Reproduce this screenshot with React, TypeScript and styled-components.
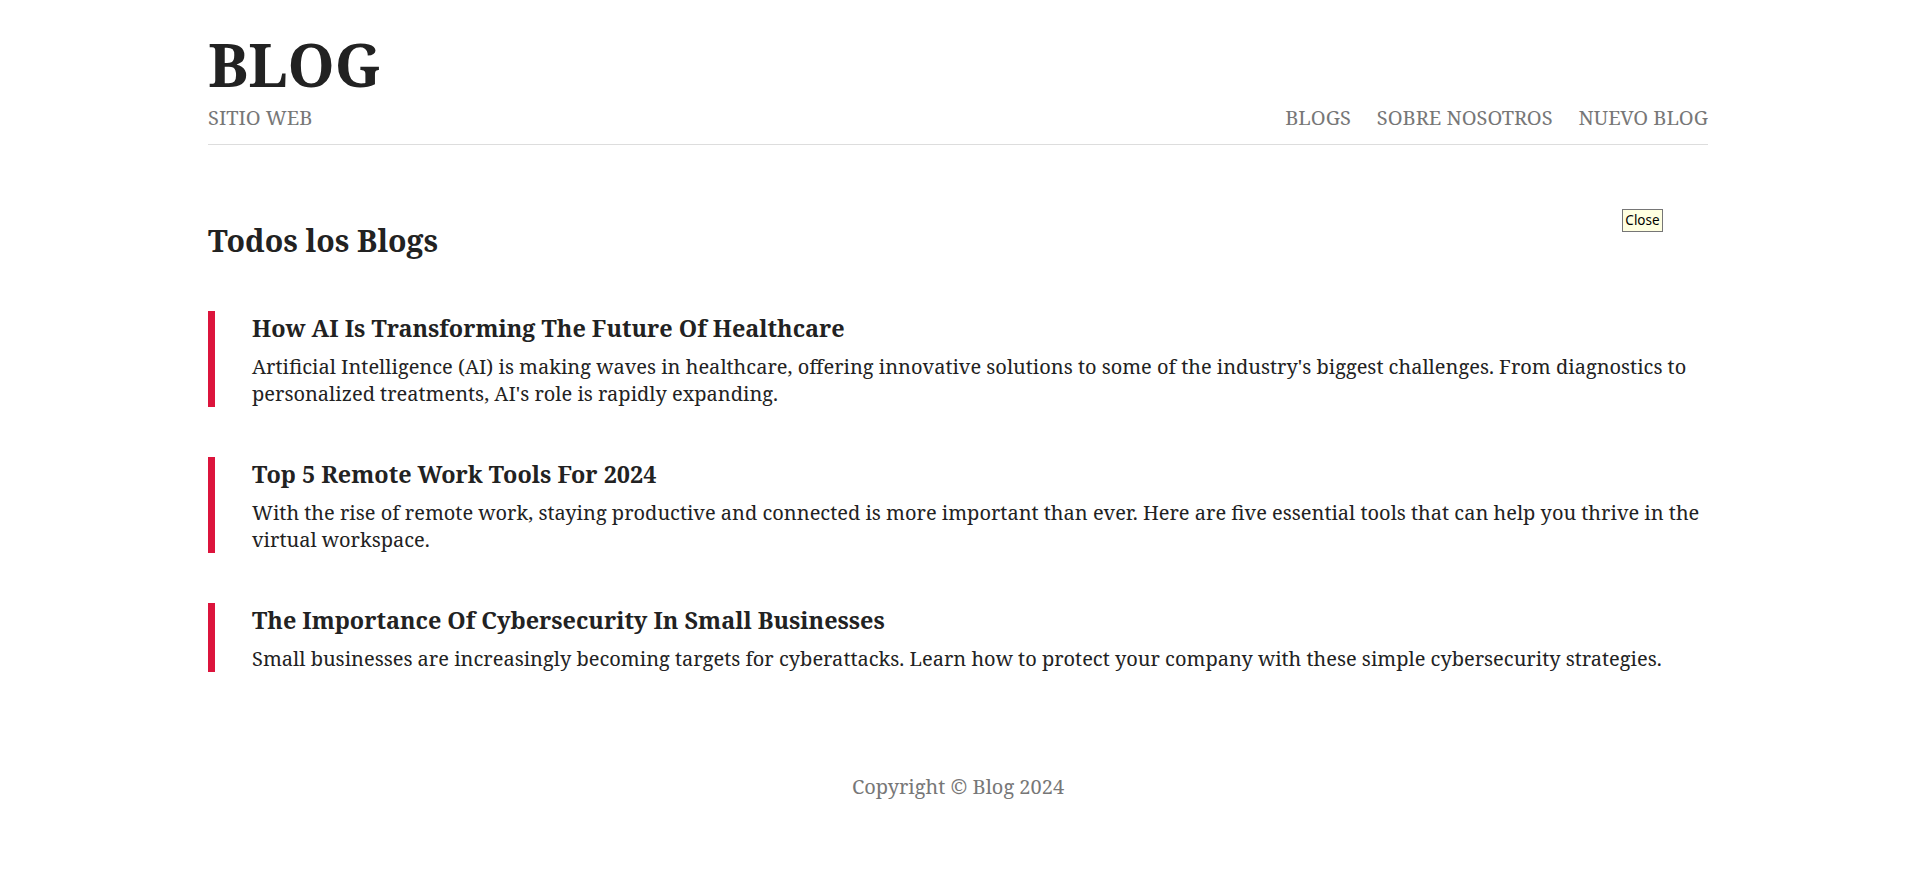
import React from "react";
import styled, { createGlobalStyle } from "styled-components";

const GlobalStyle = createGlobalStyle`
  html, body {
    margin: 0;
    padding: 0;
    background: #ffffff;
  }
  body {
    font-family: "Noto Serif", "DejaVu Serif", serif;
    color: #222222;
  }
`;

const Container = styled.div`
  position: relative;
  max-width: 1500px;
  margin: 0 auto;
`;

const Header = styled.header`
  padding: 34px 0 13px;
  border-bottom: 1px solid #dddddd;
`;

const Brand = styled.h1`
  margin: 0;
  font-size: 60px;
  line-height: 60px;
  font-weight: 700;
  color: #222222;
`;

const SubRow = styled.div`
  margin-top: 10px;
  display: flex;
  justify-content: space-between;
  align-items: baseline;
  font-size: 20px;
  color: #777777;
`;

const Tagline = styled.span`
  text-transform: uppercase;
`;

const Nav = styled.nav`
  display: flex;
  gap: 26px;
`;

const NavLink = styled.a`
  color: #777777;
  text-decoration: none;
  text-transform: uppercase;
  cursor: pointer;
`;

const Main = styled.main`
  padding-bottom: 49px;
`;

const PageTitle = styled.h2`
  margin: 75px 0 50px;
  font-size: 30.2px;
  font-weight: 700;
  color: #222222;
`;

const PostList = styled.div`
  display: flex;
  flex-direction: column;
  gap: 50px;
`;

const Post = styled.article`
  border-left: 7px solid #dc143c;
  padding-left: 37px;
`;

const PostTitle = styled.h3`
  margin: 0 0 8px;
  font-size: 23.4px;
  line-height: 34px;
  font-weight: 700;
  color: #222222;
`;

const PostExcerpt = styled.p`
  margin: 0;
  font-size: 20px;
  color: #222222;
`;

const Footer = styled.footer`
  padding-top: 52px;
  text-align: center;
  font-size: 20px;
  color: #777777;
`;

const CloseTip = styled.button`
  position: absolute;
  top: 209px;
  right: 45px;
  width: 41px;
  height: 23px;
  padding: 0;
  margin: 0;
  background: #ffffe1;
  border: 1px solid #767676;
  color: #000000;
  font-family: "Noto Sans", "DejaVu Sans", sans-serif;
  font-size: 13.5px;
  font-weight: 400;
  line-height: 21px;
  text-align: center;
`;

const posts = [
  {
    title: "How AI Is Transforming The Future Of Healthcare",
    excerpt:
      "Artificial Intelligence (AI) is making waves in healthcare, offering innovative solutions to some of the industry's biggest challenges. From diagnostics to personalized treatments, AI's role is rapidly expanding.",
  },
  {
    title: "Top 5 Remote Work Tools For 2024",
    excerpt:
      "With the rise of remote work, staying productive and connected is more important than ever. Here are five essential tools that can help you thrive in the virtual workspace.",
  },
  {
    title: "The Importance Of Cybersecurity In Small Businesses",
    excerpt:
      "Small businesses are increasingly becoming targets for cyberattacks. Learn how to protect your company with these simple cybersecurity strategies.",
  },
];

export default function App() {
  return (
    <>
      <GlobalStyle />
      <Container>
        <Header>
          <Brand>BLOG</Brand>
          <SubRow>
            <Tagline>Sitio web</Tagline>
            <Nav>
              <NavLink>Blogs</NavLink>
              <NavLink>Sobre nosotros</NavLink>
              <NavLink>Nuevo blog</NavLink>
            </Nav>
          </SubRow>
        </Header>
        <Main>
          <PageTitle>Todos los Blogs</PageTitle>
          <PostList>
            {posts.map((p) => (
              <Post key={p.title}>
                <PostTitle>{p.title}</PostTitle>
                <PostExcerpt>{p.excerpt}</PostExcerpt>
              </Post>
            ))}
          </PostList>
        </Main>
        <CloseTip type="button">Close</CloseTip>
        <Footer>Copyright © Blog 2024</Footer>
      </Container>
    </>
  );
}
